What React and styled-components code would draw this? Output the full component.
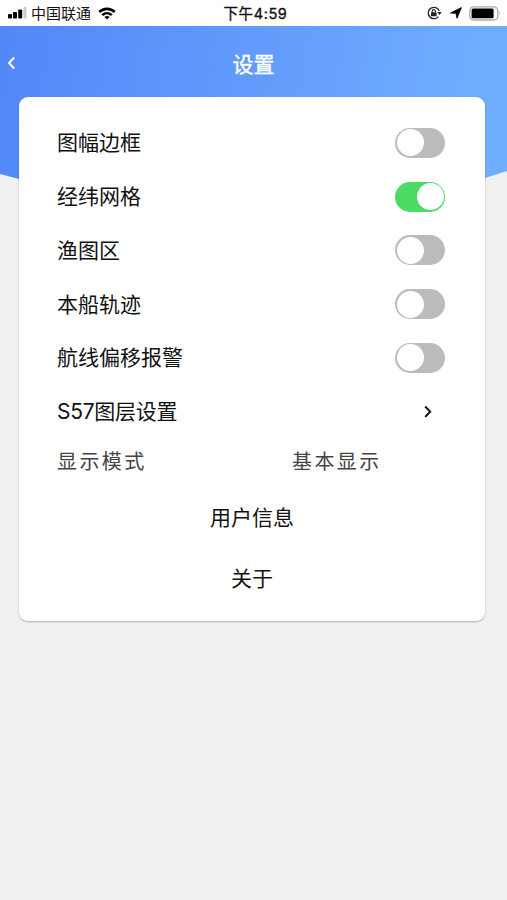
import React, { useState } from "react";
import styled, { createGlobalStyle } from "styled-components";

const GlobalStyle = createGlobalStyle`
  * {
    box-sizing: border-box;
  }

  body {
    margin: 0;
    background: #f0f0f0;
    font-family: Inter, "Noto Sans CJK SC", sans-serif;
  }
`;

const Screen = styled.div`
  width: 100%;
  height: 100vh;
  overflow: hidden;
  background: #f0f0f0;
`;

const StatusBarWrapper = styled.div`
  display: grid;
  grid-template-columns: 1fr auto 1fr;
  align-items: center;
  height: 26px;
  padding: 0 6px 0 8px;
  background: #fff;
  color: #111;
`;

const StatusGroup = styled.div`
  display: flex;
  align-items: center;
  justify-content: ${props => (props.$end ? "flex-end" : "flex-start")};
`;

const Carrier = styled.span`
  font-size: 15px;
  line-height: 20px;
  margin: 0 7px 0 4px;
  padding-top: 2px;
`;

const Clock = styled.span`
  padding: 2px 0 0 2px;
  font-size: 14.5px;
  line-height: 20px;
  letter-spacing: 0.6px;
  -webkit-text-stroke: 0.35px #111;
`;

const Hero = styled.div`
  height: 153px;
  background: linear-gradient(100deg, #5287f8 0%, #6faeff 92%);
  clip-path: polygon(
    0 0,
    100% 0,
    100% 145px,
    calc(100% - 22px) 152px,
    50% 100%,
    19px 153px,
    0 148px
  );
`;

const NavBar = styled.div`
  display: grid;
  grid-template-columns: 40px 1fr 40px;
  align-items: center;
  height: 76px;
`;

const BackButton = styled.button`
  display: flex;
  align-items: center;
  height: 40px;
  padding: 0 0 3px 7px;
  border: none;
  background: none;
`;

const Title = styled.h1`
  margin: 0;
  padding-top: 2px;
  font-size: 21px;
  font-weight: 400;
  line-height: 30px;
  text-align: center;
  color: #fff;
  -webkit-text-stroke: 0.4px #fff;
`;

const Card = styled.div`
  position: relative;
  height: 523.5px;
  margin: -82px 22px 0 19px;
  padding: 19px 38px 0;
  border-radius: 9px;
  background: #fff;
  box-shadow: 0 1px 2px rgba(0, 0, 0, 0.28);
`;

const Row = styled.div`
  display: flex;
  align-items: center;
  justify-content: space-between;
  height: 53.75px;
  padding-right: 2px;
`;

const Label = styled.span`
  padding-top: 1px;
  font-size: 21px;
  line-height: 30px;
  letter-spacing: ${props => (props.$tight ? "-0.25px" : "0")};
  color: #111;
`;

const ModeRow = styled.div`
  display: grid;
  grid-template-columns: 235px 1fr;
  align-items: center;
  height: 47px;
`;

const ModeText = styled.span`
  font-size: 20px;
  line-height: 30px;
  letter-spacing: 2.4px;
  color: #444;
`;

const Track = styled.button`
  display: flex;
  align-items: center;
  justify-content: ${props => (props.$on ? "flex-end" : "flex-start")};
  width: 50px;
  height: 30px;
  padding: 1.5px;
  border: none;
  border-radius: 15px;
  background: ${props => (props.$on ? "#4cd964" : "#bbb")};
`;

const Knob = styled.span`
  width: 27px;
  height: 27px;
  border-radius: 50%;
  background: #fff;
`;

const ChevronBox = styled.span`
  display: flex;
  margin-right: 12px;
`;

const Links = styled.div`
  padding-top: 2px;
`;

const LinkButton = styled.button`
  display: block;
  width: 100%;
  height: 61px;
  padding: 0;
  border: none;
  background: none;
  font-family: inherit;
  font-size: 21px;
  line-height: 30px;
  text-align: center;
  color: #111;
`;

const SignalIcon = () => (
  <svg width="19" height="12" viewBox="0 0 19 12">
    <rect x="0" y="7" width="4" height="4.5" rx="1" fill="#000" />
    <rect x="5" y="5" width="4" height="6.5" rx="1" fill="#000" />
    <rect x="10.2" y="2.5" width="4" height="9" rx="1" fill="#000" />
    <rect x="15.3" y="0" width="3.2" height="11.5" rx="1" fill="#ccc" />
  </svg>
);

const WifiIcon = () => (
  <svg width="18" height="13" viewBox="0 0 18 13" fill="none" stroke="#000">
    <path d="M1.2 5C5.6 0.8 12.4 0.8 16.8 5" strokeWidth="2.7" />
    <path d="M4.2 8.2C7 5.6 11 5.6 13.8 8.2" strokeWidth="2.3" />
    <path d="M6.4 9.9C7.9 8.6 10.1 8.6 11.6 9.9L9 12.6Z" fill="#000" stroke="none" />
  </svg>
);

const RotationLockIcon = () => (
  <svg width="15" height="14" viewBox="0 0 15 14" fill="none" stroke="#222">
    <path d="M12.3 5A5.7 5.7 0 1 0 11.4 10.6" strokeWidth="1.3" />
    <path d="M10.2 6.1H14.6L12.6 9Z" fill="#222" stroke="none" />
    <rect x="4" y="6.3" width="5.6" height="4" rx="0.6" fill="#222" stroke="none" />
    <path d="M5.2 6.5V5.2A1.6 1.6 0 0 1 8.4 5.2V6.5" strokeWidth="1.1" />
  </svg>
);

const LocationIcon = () => (
  <svg width="12" height="12" viewBox="0 0 12 12">
    <path
      d="M11.4 0.6L7 11.2L6 6.2L0.6 6Z"
      fill="#000"
      stroke="#000"
      strokeWidth="0.9"
      strokeLinejoin="round"
    />
  </svg>
);

const BatteryIcon = () => (
  <svg width="32" height="15" viewBox="0 0 32 15">
    <rect x="0.8" y="0.8" width="28" height="13.2" rx="4" fill="#fff" stroke="#aaa" strokeWidth="1.3" />
    <rect x="2.6" y="2.6" width="22" height="9.6" rx="1.5" fill="#000" />
    <path d="M30 5.3Q31.8 7.4 30 9.5Z" fill="#999" />
  </svg>
);

const StatusIcons = styled(StatusGroup)`
  gap: 7.5px;
`;

const StatusBar = () => (
  <StatusBarWrapper>
    <StatusGroup>
      <SignalIcon />
      <Carrier>中国联通</Carrier>
      <WifiIcon />
    </StatusGroup>
    <Clock>下午4:59</Clock>
    <StatusIcons $end>
      <RotationLockIcon />
      <LocationIcon />
      <BatteryIcon />
    </StatusIcons>
  </StatusBarWrapper>
);

const Switch = ({ on, onClick }) => (
  <Track type="button" role="switch" aria-checked={on} $on={on} onClick={onClick}>
    <Knob />
  </Track>
);

const options = [
  { id: "frame", label: "图幅边框" },
  { id: "grid", label: "经纬网格" },
  { id: "fishing", label: "渔图区" },
  { id: "track", label: "本船轨迹" },
  { id: "alarm", label: "航线偏移报警" }
];

export default function App() {
  const [enabled, setEnabled] = useState({ grid: true });

  const toggle = id => setEnabled({ ...enabled, [id]: !enabled[id] });

  return (
    <Screen>
      <GlobalStyle />
      <StatusBar />
      <Hero>
        <NavBar>
          <BackButton type="button" aria-label="返回">
            <svg width="10" height="14" viewBox="0 0 10 14" fill="none">
              <path d="M7.2 1.5L2 7L7.2 12.5" stroke="#fff" strokeWidth="2" />
            </svg>
          </BackButton>
          <Title>设置</Title>
        </NavBar>
      </Hero>
      <Card>
        {options.map(option => (
          <Row key={option.id}>
            <Label>{option.label}</Label>
            <Switch on={!!enabled[option.id]} onClick={() => toggle(option.id)} />
          </Row>
        ))}
        <Row>
          <Label $tight>S57图层设置</Label>
          <ChevronBox>
            <svg width="10" height="14" viewBox="0 0 10 14" fill="none">
              <path d="M2.2 1.5L7.2 6.7L2.2 11.9" stroke="#111" strokeWidth="2" />
            </svg>
          </ChevronBox>
        </Row>
        <ModeRow>
          <ModeText>显示模式</ModeText>
          <ModeText>基本显示</ModeText>
        </ModeRow>
        <Links>
          <LinkButton type="button">用户信息</LinkButton>
          <LinkButton type="button">关于</LinkButton>
        </Links>
      </Card>
    </Screen>
  );
}
